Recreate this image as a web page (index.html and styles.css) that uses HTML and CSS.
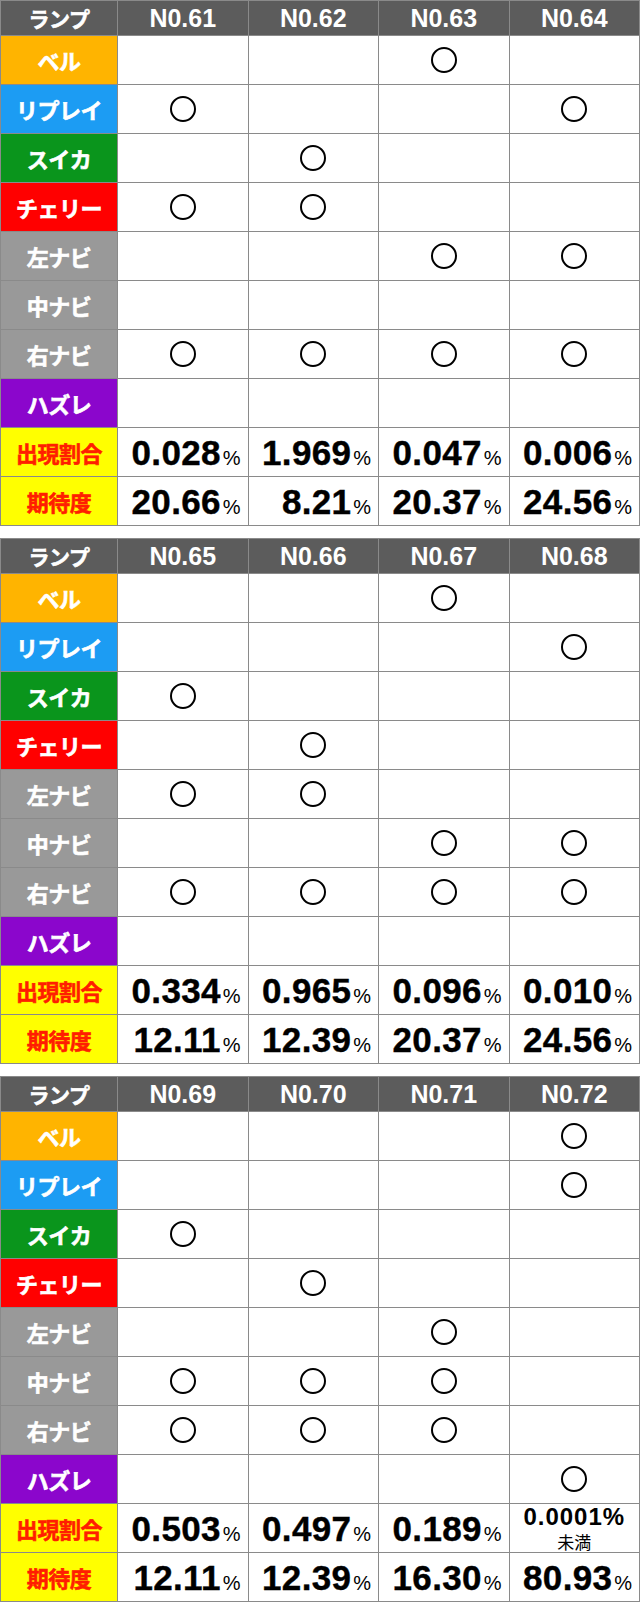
FILE: index.html
```html
<!DOCTYPE html>
<html lang="ja">
<head>
<meta charset="utf-8">
<link rel="stylesheet" href="styles.css">
</head>
<body>
<div class="page">

<div class="tbl">
  <div class="hd lab">ランプ</div><div class="hd">N0.61</div><div class="hd">N0.62</div><div class="hd">N0.63</div><div class="hd">N0.64</div>
  <div class="lab bell">ベル</div><div class="c"></div><div class="c"></div><div class="c"><i class="o"></i></div><div class="c"></div>
  <div class="lab replay">リプレイ</div><div class="c"><i class="o"></i></div><div class="c"></div><div class="c"></div><div class="c"><i class="o"></i></div>
  <div class="lab suika">スイカ</div><div class="c"></div><div class="c"><i class="o"></i></div><div class="c"></div><div class="c"></div>
  <div class="lab cherry">チェリー</div><div class="c"><i class="o"></i></div><div class="c"><i class="o"></i></div><div class="c"></div><div class="c"></div>
  <div class="lab navi">左ナビ</div><div class="c"></div><div class="c"></div><div class="c"><i class="o"></i></div><div class="c"><i class="o"></i></div>
  <div class="lab navi">中ナビ</div><div class="c"></div><div class="c"></div><div class="c"></div><div class="c"></div>
  <div class="lab navi">右ナビ</div><div class="c"><i class="o"></i></div><div class="c"><i class="o"></i></div><div class="c"><i class="o"></i></div><div class="c"><i class="o"></i></div>
  <div class="lab hazure">ハズレ</div><div class="c"></div><div class="c"></div><div class="c"></div><div class="c"></div>
  <div class="lab yel">出現割合</div><div class="c num">0.028<span class="pc">%</span></div><div class="c num">1.969<span class="pc">%</span></div><div class="c num">0.047<span class="pc">%</span></div><div class="c num">0.006<span class="pc">%</span></div>
  <div class="lab yel">期待度</div><div class="c num">20.66<span class="pc">%</span></div><div class="c num">8.21<span class="pc">%</span></div><div class="c num">20.37<span class="pc">%</span></div><div class="c num">24.56<span class="pc">%</span></div>
</div>

<div class="tbl">
  <div class="hd lab">ランプ</div><div class="hd">N0.65</div><div class="hd">N0.66</div><div class="hd">N0.67</div><div class="hd">N0.68</div>
  <div class="lab bell">ベル</div><div class="c"></div><div class="c"></div><div class="c"><i class="o"></i></div><div class="c"></div>
  <div class="lab replay">リプレイ</div><div class="c"></div><div class="c"></div><div class="c"></div><div class="c"><i class="o"></i></div>
  <div class="lab suika">スイカ</div><div class="c"><i class="o"></i></div><div class="c"></div><div class="c"></div><div class="c"></div>
  <div class="lab cherry">チェリー</div><div class="c"></div><div class="c"><i class="o"></i></div><div class="c"></div><div class="c"></div>
  <div class="lab navi">左ナビ</div><div class="c"><i class="o"></i></div><div class="c"><i class="o"></i></div><div class="c"></div><div class="c"></div>
  <div class="lab navi">中ナビ</div><div class="c"></div><div class="c"></div><div class="c"><i class="o"></i></div><div class="c"><i class="o"></i></div>
  <div class="lab navi">右ナビ</div><div class="c"><i class="o"></i></div><div class="c"><i class="o"></i></div><div class="c"><i class="o"></i></div><div class="c"><i class="o"></i></div>
  <div class="lab hazure">ハズレ</div><div class="c"></div><div class="c"></div><div class="c"></div><div class="c"></div>
  <div class="lab yel">出現割合</div><div class="c num">0.334<span class="pc">%</span></div><div class="c num">0.965<span class="pc">%</span></div><div class="c num">0.096<span class="pc">%</span></div><div class="c num">0.010<span class="pc">%</span></div>
  <div class="lab yel">期待度</div><div class="c num">12.11<span class="pc">%</span></div><div class="c num">12.39<span class="pc">%</span></div><div class="c num">20.37<span class="pc">%</span></div><div class="c num">24.56<span class="pc">%</span></div>
</div>

<div class="tbl">
  <div class="hd lab">ランプ</div><div class="hd">N0.69</div><div class="hd">N0.70</div><div class="hd">N0.71</div><div class="hd">N0.72</div>
  <div class="lab bell">ベル</div><div class="c"></div><div class="c"></div><div class="c"></div><div class="c"><i class="o"></i></div>
  <div class="lab replay">リプレイ</div><div class="c"></div><div class="c"></div><div class="c"></div><div class="c"><i class="o"></i></div>
  <div class="lab suika">スイカ</div><div class="c"><i class="o"></i></div><div class="c"></div><div class="c"></div><div class="c"></div>
  <div class="lab cherry">チェリー</div><div class="c"></div><div class="c"><i class="o"></i></div><div class="c"></div><div class="c"></div>
  <div class="lab navi">左ナビ</div><div class="c"></div><div class="c"></div><div class="c"><i class="o"></i></div><div class="c"></div>
  <div class="lab navi">中ナビ</div><div class="c"><i class="o"></i></div><div class="c"><i class="o"></i></div><div class="c"><i class="o"></i></div><div class="c"></div>
  <div class="lab navi">右ナビ</div><div class="c"><i class="o"></i></div><div class="c"><i class="o"></i></div><div class="c"><i class="o"></i></div><div class="c"></div>
  <div class="lab hazure">ハズレ</div><div class="c"></div><div class="c"></div><div class="c"></div><div class="c"><i class="o"></i></div>
  <div class="lab yel">出現割合</div><div class="c num">0.503<span class="pc">%</span></div><div class="c num">0.497<span class="pc">%</span></div><div class="c num">0.189<span class="pc">%</span></div><div class="c small"><span class="sn">0.0001%</span><span class="sj">未満</span></div>
  <div class="lab yel">期待度</div><div class="c num">12.11<span class="pc">%</span></div><div class="c num">12.39<span class="pc">%</span></div><div class="c num">16.30<span class="pc">%</span></div><div class="c num">80.93<span class="pc">%</span></div>
</div>

</div>
</body>
</html>
```

FILE: styles.css
```css
html, body {
  margin: 0;
  padding: 0;
  background: #fff;
}
.page {
  width: 640px;
  display: flex;
  flex-direction: column;
  gap: 12px;
  padding-bottom: 11px;
}
.tbl {
  display: grid;
  grid-template-columns: 116px repeat(4, 1fr);
  grid-template-rows: 34px repeat(10, 48px);
  gap: 1px;
  padding: 1px;
  background: #8a8a8a;
  width: 638px;
}
.tbl > div {
  display: flex;
  align-items: center;
  justify-content: center;
  background: #fff;
}
.tbl > .hd {
  background: #5c5c5c;
  color: #fff;
  font-family: "Liberation Sans", Arial, sans-serif;
  font-weight: bold;
  font-size: 25px;
}
.tbl > .lab {
  color: #fff;
  font-family: "Noto Sans CJK JP", sans-serif;
  font-weight: bold;
  font-size: 22px;
  letter-spacing: -0.5px;
  -webkit-text-stroke: 0.6px currentColor;
}
.tbl > .bell { background: #ffb400; }
.tbl > .replay { background: #1c9cf3; }
.tbl > .suika { background: #0a951c; }
.tbl > .cherry { background: #ff0000; }
.tbl > .navi { background: #999999; }
.tbl > .hazure { background: #8b06cc; }
.tbl > .yel { background: #ffff00; color: #ff1e00; }
.tbl > .hd.lab { background: #5c5c5c; color: #fff; font-size: 21px; }
.o {
  display: block;
  width: 22px;
  height: 22px;
  border: 2.5px solid #000;
  border-radius: 50%;
}
.tbl > .num {
  justify-content: flex-end;
  align-items: baseline;
  padding: 0 7px 0 0;
  line-height: 50px;
  font-family: "Liberation Sans", Arial, sans-serif;
  font-weight: bold;
  font-size: 35px;
  color: #000;
  letter-spacing: 0.3px;
  -webkit-text-stroke: 0.4px #000;
}
.pc {
  font-weight: normal;
  font-size: 20px;
  margin-left: 2px;
  letter-spacing: 0;
  -webkit-text-stroke: 0;
}
.tbl > .small {
  flex-direction: column;
  font-family: "Liberation Sans", Arial, sans-serif;
  color: #000;
}
.sn {
  font-weight: bold;
  font-size: 24px;
  line-height: 24px;
  letter-spacing: 1px;
}
.sj {
  font-family: "Noto Sans CJK JP", sans-serif;
  font-size: 17px;
  line-height: 20px;
  margin-top: 3px;
}
```
